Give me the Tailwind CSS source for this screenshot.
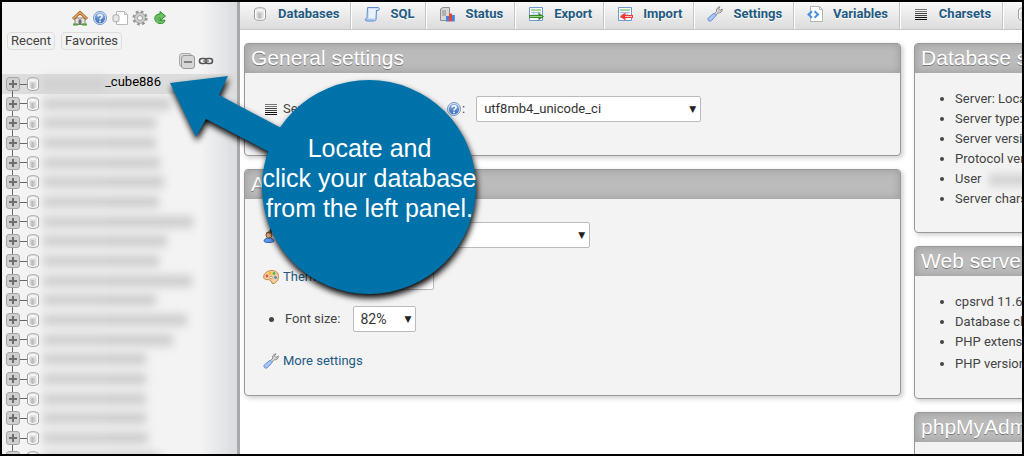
<!DOCTYPE html>
<html lang="en">
<head>
    <meta charset="UTF-8">
    <meta name="viewport" content="width=device-width, initial-scale=1.0">
    <title>phpMyAdmin</title>
    <script src="https://cdn.jsdelivr.net/npm/@tailwindcss/browser@4"></script>
</head>
<body class="relative flex h-screen overflow-hidden border-2 border-black bg-white font-['Roboto','Liberation_Sans',sans-serif] text-[13px] leading-5 text-[#444]">

    <!-- Icon sprite -->
    <svg class="absolute size-0" aria-hidden="true">
        <defs>
            <linearGradient id="g-cyl"><stop offset="0" stop-color="#f0f0f0"/><stop offset=".4" stop-color="#b8b8b8"/><stop offset="1" stop-color="#eee"/></linearGradient>
            <linearGradient id="g-help" x2="0" y2="1"><stop offset="0" stop-color="#8fb4e4"/><stop offset="1" stop-color="#3a6bb5"/></linearGradient>
        </defs>
        <symbol id="i-db" viewBox="0 0 16 16">
            <path d="M2.5 4c0-3 11-3 11 0v8c0 3.200-11 3.200-11 0z" fill="#fff" stroke="#a0a0a0"/>
            <path d="M4 5.500c2 1.400 6 1.400 8 0v6.300c-2 1.500-6 1.500-8 0z" fill="url(#g-cyl)"/>
            <ellipse cx="8" cy="4.200" rx="4" ry="1.500" fill="#fafafa" stroke="#ccc" stroke-width=".6"/>
        </symbol>
        <symbol id="i-home" viewBox="0 0 16 16">
            <path d="M3 8h10v6.500H3z" fill="#e8e4dc" stroke="#8d8577"/>
            <path d="M6.500 9.500h3v5h-3z" fill="#6c6f78"/>
            <path d="M1 14.500h5M10 14.500h5" stroke="#4fa33a" stroke-width="2"/>
            <path d="M1 9l7-6.500L15 9" fill="none" stroke="#8e4f1d" stroke-width="3"/>
            <path d="M1.300 8.600L8 2.400l6.700 6.200" fill="none" stroke="#e8a257" stroke-width="1.600"/>
        </symbol>
        <symbol id="i-help" viewBox="0 0 16 16">
            <circle cx="8" cy="8" r="6.500" fill="#dbe6f5" stroke="#7296ca"/>
            <circle cx="8" cy="8" r="5.200" fill="url(#g-help)"/>
            <path d="M6 6.600c0-2.600 4.100-2.600 4.100-.1C10.100 8 8 8 8 9.600" fill="none" stroke="#fff" stroke-width="1.500"/>
            <circle cx="8" cy="11.500" r=".9" fill="#fff"/>
        </symbol>
        <symbol id="i-doc" viewBox="0 0 16 16">
            <path d="M4.500 1.500h8l3 3v10h-11z" fill="#fff" stroke="#b9b9b9"/>
            <path d="M12.500 1.500v3h3" fill="none" stroke="#b9b9b9"/>
            <path d="M1 6c0-1.600 6-1.600 6 0v4.500c0 1.800-6 1.800-6 0z" fill="#e6e6e6" stroke="#aaa"/>
        </symbol>
        <symbol id="i-gear" viewBox="0 0 16 16">
            <circle cx="8" cy="8" r="6.300" fill="none" stroke="#969696" stroke-width="2.600" stroke-dasharray="2.600 2.350"/>
            <circle cx="8" cy="8" r="3.900" fill="none" stroke="#969696" stroke-width="3.600"/>
            <circle cx="8" cy="8" r="3.900" fill="none" stroke="#cfcfcf" stroke-width="2.200"/>
        </symbol>
        <symbol id="i-reload" viewBox="0 0 16 16">
            <path d="M9.500 13.500C5.500 14 2.800 11.500 2.800 8.300 2.800 5.500 5 4 8 4V1.500l5.500 4.500L8 10.500V7.600c-1.500 0-1.800.6-1.800 1.200 0 1.200 1.800 2 3.800 1.400h3c-.2 1.800-1.500 3-3.500 3.300z" fill="#6cc25f" stroke="#2f8a30"/>
        </symbol>
        <symbol id="i-link" viewBox="0 0 16 16">
            <rect x="1.500" y="5.500" width="7" height="5" rx="2.500" fill="none" stroke="#555" stroke-width="1.600"/>
            <rect x="7.500" y="5.500" width="7" height="5" rx="2.500" fill="none" stroke="#555" stroke-width="1.600"/>
            <path d="M5 8h6" stroke="#777" stroke-width="1.500"/>
        </symbol>
        <symbol id="i-minus" viewBox="0 0 16 16">
            <rect x=".5" y=".5" width="12" height="13" rx="2.500" fill="#dcdcdc" stroke="#aaa"/>
            <rect x="2.500" y="2.500" width="13" height="13" rx="2.500" fill="#d6d6d6" stroke="#999"/>
            <path d="M5 9h8" stroke="#666" stroke-width="1.500"/>
        </symbol>
        <symbol id="i-plus" viewBox="0 0 14 14">
            <rect x=".5" y=".5" width="13" height="13" rx="2.500" fill="#cfcfcf" stroke="#a5a5a5"/>
            <path d="M3 7h8M7 3v8" stroke="#6e6e6e" stroke-width="2"/>
        </symbol>
        <symbol id="i-sql" viewBox="0 0 16 16">
            <path d="M3.500 1.500h11c1 0 1 3-.5 3h-1.500l-.5 9.500c0 1.500-11 1.500-11 0 0-1.500 2-1.500 2-1.500z" fill="#cfe0f6" stroke="#5d8ccc"/>
            <path d="M5 3h6.500l-.5 9H5z" fill="#e9f2fc"/>
            <path d="M1.500 14h8.500" stroke="#7aa5dc"/>
        </symbol>
        <symbol id="i-status" viewBox="0 0 16 16">
            <path d="M1.500 3L4 1.500h6.500V13L8 14.500H1.500z" fill="#d6d6d6" stroke="#8e8e8e"/>
            <path d="M3 5h4M3 7h4M3 9h4" stroke="#8a8a8a"/>
            <path d="M10 7.500h3v8h-3z" fill="#e8452c"/>
            <path d="M7 10h3v5.500H7z" fill="#3f84e0"/>
            <path d="M13 9h2.800v6.500H13z" fill="#3f84e0"/>
        </symbol>
        <symbol id="i-sheet" viewBox="0 0 16 16">
            <path d="M1.500 1.500h13v13h-13z" fill="#fff" stroke="#6f97d0"/>
            <path d="M3 4h10" stroke="#8cc97c" stroke-width="1.500"/>
            <path d="M3 6.500h10M3 9h10M3 11.500h10" stroke="#a9c1e4"/>
            <path d="M6 5.500v7M10 5.500v7" stroke="#a9c1e4"/>
        </symbol>
        <symbol id="i-export" viewBox="0 0 16 16">
            <use href="#i-sheet"/>
            <path d="M1 9h9.500V6.500L16 10.500l-5.500 4V12H1z" fill="#3c8c28"/>
            <path d="M2 10.500h12" stroke="#9ad585"/>
        </symbol>
        <symbol id="i-import" viewBox="0 0 16 16">
            <use href="#i-sheet"/>
            <path d="M16 9H8.500V6.500L3 10.500l5.500 4V12H16z" fill="#ef3b33"/>
            <path d="M8 10.500h7" stroke="#ffc0b8"/>
        </symbol>
        <symbol id="i-wrench" viewBox="0 0 16 16">
            <path d="M7 8l2.500-2.500C9 3 10.500 1 13 .8L11.500 3l1.500 1.500L15.300 3c.3 2.800-2 4.300-4 3.800L8.500 9.500z" fill="#d2d2d2" stroke="#858585" stroke-width=".9"/>
            <path d="M6.800 7.200l2.300 2.300-4.500 5c-2 1.800-4.700-.5-3.300-2.500z" fill="#a5c5f2" stroke="#6690cf"/>
        </symbol>
        <symbol id="i-vars" viewBox="0 0 16 16">
            <path d="M3.500.5h9l3 3v12h-12z" fill="#fff" stroke="#b5b5b5"/>
            <path d="M12.500.5v3h3" fill="none" stroke="#b5b5b5"/>
            <path d="M5 5.300L1.500 8.500 5 11.700M7.500 5.300L11 8.500l-3.500 3.200" fill="none" stroke="#4a8ee6" stroke-width="2"/>
        </symbol>
        <symbol id="i-lines" viewBox="0 0 16 16">
            <path d="M2 3.500h12M2 5.500h12" stroke="#777"/>
            <path d="M2 7.500h12M2 9.500h12" stroke="#444"/>
            <path d="M2 11.500h12M2 13.500h12" stroke="#111"/>
        </symbol>
        <symbol id="i-user" viewBox="0 0 16 16">
            <path d="M7 8V3.500L8.500.5v7" fill="#555" stroke="#444"/>
            <path d="M1 14c0-4 10-4 10 0 0 2-10 2-10 0z" fill="#5c9cf0" stroke="#2f62b0"/>
            <circle cx="6" cy="8" r="3" fill="#e8b27c" stroke="#7a5230"/>
            <path d="M3 7c0-3.500 6-3.500 6 0-2-1-4-1-6 0z" fill="#7a5230"/>
        </symbol>
        <symbol id="i-palette" viewBox="0 0 16 16">
            <path d="M9 1.500c4 0 6.500 2.500 6.500 6 0 4-3 7-5.500 7-2 0-1-2.500-3-3.500-2-.8-6 .5-6.300-3C.5 4.500 4.500 1.500 9 1.500z" fill="#f5cf9b" stroke="#c08447"/>
            <circle cx="4" cy="7" r="1.400" fill="#e65050"/>
            <circle cx="7" cy="4.300" r="1.400" fill="#f2b91e"/>
            <circle cx="11" cy="4.500" r="1.400" fill="#5bb54e"/>
            <circle cx="12.500" cy="8.500" r="1.400" fill="#4a8bdc"/>
            <circle cx="8" cy="8.500" r="1.300" fill="#fff" stroke="#b0804d" stroke-width=".8"/>
        </symbol>
    </svg>

    <!-- Navigation panel -->
    <aside class="w-[238px] shrink-0 overflow-hidden border-r-3 border-[#a9a9a9] bg-linear-to-r from-[#f3f3f3] from-85% to-[#d9dce0]">
        <div class="flex justify-center gap-1 pt-2">
            <a href="#" aria-label="Home"><svg class="size-4"><use href="#i-home"/></svg></a>
            <a href="#" aria-label="Documentation"><svg class="size-4"><use href="#i-help"/></svg></a>
            <a href="#" aria-label="SQL docs"><svg class="size-4"><use href="#i-doc"/></svg></a>
            <a href="#" aria-label="Panel settings"><svg class="size-4"><use href="#i-gear"/></svg></a>
            <a href="#" aria-label="Reload"><svg class="size-4"><use href="#i-reload"/></svg></a>
        </div>
        <div class="mt-1.5 flex gap-1.5 pl-[5px]">
            <button class="h-[18px] rounded-sm border border-[#ddd] px-[3px] leading-4">Recent</button>
            <button class="h-[18px] rounded-sm border border-[#ddd] px-[3px] leading-4">Favorites</button>
        </div>
        <div class="mt-[3px] flex justify-end gap-[3px] pr-[23px]">
            <button aria-label="Collapse all"><svg class="size-4"><use href="#i-minus"/></svg></button>
            <button aria-label="Unlink"><svg class="size-4"><use href="#i-link"/></svg></button>
        </div>
        <ul id="tree" class="mt-[5px]"></ul>
    </aside>

    <!-- Main content -->
    <main class="min-w-0 flex-1 overflow-hidden">
        <nav class="flex h-7 border-b border-[#c6c6c6] bg-linear-to-b from-[#f8f8f8] to-[#dcdcdc] font-bold text-[#235a81] text-shadow-[0_1px_0_#fff]">
            <a href="#" class="flex shrink-0 items-center gap-2.5 border-r border-[#c6c6c6] pr-[11px] pb-1 pl-3"><svg class="size-4"><use href="#i-db"/></svg>Databases</a>
            <a href="#" class="flex shrink-0 items-center gap-2.5 border-r border-l border-r-[#c6c6c6] border-l-white pr-[11px] pb-1 pl-3"><svg class="size-4"><use href="#i-sql"/></svg>SQL</a>
            <a href="#" class="flex shrink-0 items-center gap-2.5 border-r border-l border-r-[#c6c6c6] border-l-white pr-[11px] pb-1 pl-3"><svg class="size-4"><use href="#i-status"/></svg>Status</a>
            <a href="#" class="flex shrink-0 items-center gap-2.5 border-r border-l border-r-[#c6c6c6] border-l-white pr-[11px] pb-1 pl-3"><svg class="size-4"><use href="#i-export"/></svg>Export</a>
            <a href="#" class="flex shrink-0 items-center gap-2.5 border-r border-l border-r-[#c6c6c6] border-l-white pr-[11px] pb-1 pl-3"><svg class="size-4"><use href="#i-import"/></svg>Import</a>
            <a href="#" class="flex shrink-0 items-center gap-2.5 border-r border-l border-r-[#c6c6c6] border-l-white pr-[11px] pb-1 pl-3"><svg class="size-4"><use href="#i-wrench"/></svg>Settings</a>
            <a href="#" class="flex shrink-0 items-center gap-2.5 border-r border-l border-r-[#c6c6c6] border-l-white pr-[11px] pb-1 pl-3"><svg class="size-4"><use href="#i-vars"/></svg>Variables</a>
            <a href="#" class="flex shrink-0 items-center gap-2.5 border-r border-l border-r-[#c6c6c6] border-l-white pr-[11px] pb-1 pl-3"><svg class="size-4"><use href="#i-lines"/></svg>Charsets</a>
            <a href="#" aria-label="Engines" class="flex shrink-0 items-center border-l border-white pb-1 pl-3"><svg class="size-4"><use href="#i-db"/></svg></a>
        </nav>

        <div class="flex gap-[13px] pt-[13px] pr-[5px] pl-1">
            <div class="flex w-[85%] shrink-0 flex-col gap-[13px]">
                <section class="overflow-hidden rounded border border-[#999] bg-[#f3f3f3] shadow-[2px_2px_5px_#ccc]">
                    <h2 class="h-[29px] bg-[#bbb] px-1.5 font-['Liberation_Sans',sans-serif] text-[21px] leading-7 text-white inset-shadow-[0_0_8px_#999] text-shadow-[0_1px_0_#777]">General settings</h2>
                    <div class="flex items-start px-[18px] pt-[23px] pb-[33px]">
                        <label for="collation" class="flex h-[26px] items-center gap-1"><svg class="size-4"><use href="#i-lines"/></svg>Server connection collation<span class="ml-0.5 flex items-center"><svg class="size-4"><use href="#i-help"/></svg>:</span></label>
                        <div class="relative ml-[11px]">
                            <select id="collation" class="h-[26px] w-[225px] appearance-none rounded-xs border border-[#bbb] bg-white px-[7px] text-[#333]"><option>utf8mb4_unicode_ci</option></select>
                            <span class="pointer-events-none absolute top-[3px] right-[5px] font-['DejaVu_Sans'] text-[9px] text-[#222]">▼</span>
                        </div>
                    </div>
                </section>

                <section class="overflow-hidden rounded border border-[#999] bg-[#f3f3f3] shadow-[2px_2px_5px_#ccc]">
                    <h2 class="h-[29px] bg-[#bbb] px-1.5 font-['Liberation_Sans',sans-serif] text-[21px] leading-7 text-white inset-shadow-[0_0_8px_#999] text-shadow-[0_1px_0_#777]">Appearance settings</h2>
                    <div class="flex flex-col gap-4 px-[18px] pt-[23px] pb-[21px]">
                        <div class="flex h-[26px] items-center gap-1">
                            <svg class="size-4"><use href="#i-user"/></svg>
                            <label for="lang">Language:</label>
                            <div class="relative ml-2">
                                <select id="lang" class="h-[26px] w-[235px] appearance-none rounded-xs border border-[#bbb] bg-white px-[7px] text-[#333]"><option>English</option></select>
                                <span class="pointer-events-none absolute top-[3px] right-[5px] font-['DejaVu_Sans'] text-[9px] text-[#222]">▼</span>
                            </div>
                        </div>
                        <div class="flex h-[26px] items-center gap-1">
                            <svg class="size-4"><use href="#i-palette"/></svg>
                            <label for="theme" class="text-[#235a81]">Theme:</label>
                            <select id="theme" class="ml-2 h-[26px] w-24 appearance-none rounded-xs border border-[#bbb] bg-white px-[7px] text-[#333]"><option>pmahomme</option></select>
                        </div>
                        <div class="flex h-[26px] items-center gap-1.5">
                            <span class="flex w-4 justify-center"><span class="size-[5px] rounded-full bg-[#444]"></span></span>
                            <label for="fontsize">Font size:</label>
                            <div class="relative ml-[7px]">
                                <select id="fontsize" class="h-[26px] w-[63px] appearance-none rounded-xs border border-[#bbb] bg-white px-1.5 text-sm text-[#333]"><option>82%</option></select>
                                <span class="pointer-events-none absolute top-[3px] right-[5px] font-['DejaVu_Sans'] text-[9px] text-[#222]">▼</span>
                            </div>
                        </div>
                        <a href="#" class="flex h-[26px] items-center gap-1 text-[#235a81]"><svg class="size-4"><use href="#i-wrench"/></svg>More settings</a>
                    </div>
                </section>
            </div>

            <div class="flex w-80 shrink-0 flex-col gap-[13px] whitespace-nowrap">
                <section class="overflow-hidden rounded border border-[#999] bg-[#f3f3f3] shadow-[2px_2px_5px_#ccc]">
                    <h2 class="h-[29px] bg-[#bbb] px-1.5 font-['Liberation_Sans',sans-serif] text-[21px] leading-7 text-white inset-shadow-[0_0_8px_#999] text-shadow-[0_1px_0_#777]">Database server</h2>
                    <ul class="list-disc pt-4 pb-[23px] pl-10">
                        <li>Server: Localhost via UNIX socket</li>
                        <li>Server type: MySQL</li>
                        <li>Server version: 5.6</li>
                        <li>Protocol version: 10</li>
                        <li>User <span class="ml-1 inline-block h-3 w-20 bg-[#d2d2d2] align-middle blur-xs"></span></li>
                        <li>Server charset: UTF-8 Unicode (utf8)</li>
                    </ul>
                </section>

                <section class="overflow-hidden rounded border border-[#999] bg-[#f3f3f3] shadow-[2px_2px_5px_#ccc]">
                    <h2 class="h-[29px] bg-[#bbb] px-1.5 font-['Liberation_Sans',sans-serif] text-[21px] leading-7 text-white inset-shadow-[0_0_8px_#999] text-shadow-[0_1px_0_#777]">Web server</h2>
                    <ul class="list-disc pt-4 pb-[22px] pl-10">
                        <li>cpsrvd 11.66.0.23</li>
                        <li>Database client version: libmysql</li>
                        <li>PHP extension: mysqli</li>
                        <li class="leading-6">PHP version: 5.6.30</li>
                    </ul>
                </section>

                <section class="overflow-hidden rounded border border-[#999] bg-[#f3f3f3] shadow-[2px_2px_5px_#ccc]">
                    <h2 class="h-[29px] bg-[#bbb] px-1.5 font-['Liberation_Sans',sans-serif] text-[21px] leading-7 text-white inset-shadow-[0_0_8px_#999] text-shadow-[0_1px_0_#777]">phpMyAdmin</h2>
                    <ul class="list-disc pt-4 pb-[23px] pl-10">
                        <li>Version information: 4.6.6</li>
                    </ul>
                </section>
            </div>
        </div>
    </main>

    <!-- Callout -->
    <div class="pointer-events-none absolute top-[70px] left-[160px] h-[240px] w-[330px]">
        <svg class="size-full overflow-visible drop-shadow-[1px_4px_3px_#000]" viewBox="162 72 330 240" fill="#0072aa">
            <path d="M170 83l58-7-9 19 66 35-14 23-65-34-10 18z"/>
            <circle cx="369" cy="187" r="107"/>
        </svg>
        <p class="absolute top-[61px] left-[100px] w-[215px] text-center font-['Liberation_Sans',sans-serif] text-[25px] leading-[30px] whitespace-nowrap text-white">Locate and<br>click your database<br>from the left panel.</p>
    </div>

    <script>
        // Widths of the hidden database names
        const names = [62, 128, 113, 113, 117, 121, 116, 150, 124, 116, 149, 113, 144, 130, 103, 103, 103, 103, 105, 116];

        document.getElementById('tree').innerHTML = names.map((width, i) => `
            <li class="relative flex h-5 items-center pl-1 nth-[3n+2]:h-[19px] ${i === 0 ? 'bg-[#dcdcdc]' : ''}">
                <span class="absolute left-[10px] w-px bg-[#666] ${i === 0 ? 'top-1/2 h-1/2' : 'top-0 h-full'}"></span>
                <button class="relative" aria-label="Expand"><svg class="size-3.5"><use href="#i-plus"/></svg></button>
                <span class="-mr-0.5 h-px w-[7px] bg-[#666]"></span>
                <svg class="size-4"><use href="#i-db"/></svg>
                <span class="ml-0.5 flex h-3 items-center blur-xs">
                    <span class="h-3 w-[62px] bg-[#d0d0d0]"></span>
                    <span class="h-3 bg-[#cecece]" style="width: ${width - 62}px"></span>
                </span>
                ${i === 0 ? '<a href="#" class="pb-1 text-black">_cube886</a>' : ''}
            </li>`).join('');
    </script>
</body>
</html>
